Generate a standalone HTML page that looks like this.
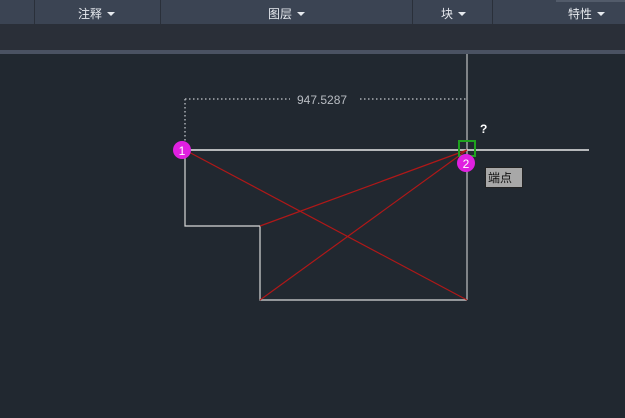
<!DOCTYPE html>
<html><head><meta charset="utf-8"><style>
html,body{margin:0;padding:0;width:625px;height:418px;overflow:hidden;background:#212830;font-family:"Liberation Sans","Noto Sans CJK SC",sans-serif}
.tb{position:absolute;left:0;top:0;width:625px;height:24px;background:#3b4453}
.sep{position:absolute;top:0;width:1px;height:24px;background:#2a303a}
.lbl{position:absolute;top:7px;font-size:12px;color:#e6e9ee;line-height:14px}
.tri{display:inline-block;width:0;height:0;border-left:4px solid transparent;border-right:4px solid transparent;border-top:4px solid #e6e9ee;margin-left:5px;vertical-align:2px}
</style></head><body>
<div class="tb">
<div class="sep" style="left:34px"></div>
<div class="sep" style="left:160px"></div>
<div class="sep" style="left:412px"></div>
<div class="sep" style="left:492px"></div>
<div class="lbl" style="left:78px">注释<span class="tri"></span></div>
<div class="lbl" style="left:268px">图层<span class="tri"></span></div>
<div class="lbl" style="left:441px">块<span class="tri"></span></div>
<div class="lbl" style="left:568px">特性<span class="tri"></span></div>
<div style="position:absolute;left:556px;top:0;width:69px;height:2px;background:#525b6a"></div>
</div>
<div style="position:absolute;left:0;top:24px;width:625px;height:26px;background:#2a2f38"></div>
<div style="position:absolute;left:0;top:50px;width:625px;height:4px;background:#4a5262"></div>
<svg width="625" height="418" style="position:absolute;left:0;top:0">
<line x1="467" y1="54" x2="467" y2="300" stroke="#e0e0e0" stroke-width="1"/>
<line x1="183" y1="150" x2="589" y2="150" stroke="#e8e8e8" stroke-width="1.5"/>
<polyline points="185,150 185,226 260,226 260,300 467,300" fill="none" stroke="#d8d8d8" stroke-width="1.2"/>
<g stroke="#b01818" stroke-width="1.2">
<line x1="185" y1="150" x2="467" y2="300"/>
<line x1="260" y1="300" x2="467" y2="150"/>
<line x1="260" y1="226" x2="467" y2="150"/>
</g>
<g stroke="#a9adb3" stroke-width="1.5" stroke-dasharray="1.5,2.5">
<line x1="185" y1="99" x2="290" y2="99"/>
<line x1="360" y1="99" x2="467" y2="99"/>
<line x1="185" y1="99" x2="185" y2="145"/>
</g>
<text x="297" y="104" font-size="12" fill="#b8bcc2" font-family="Liberation Sans,sans-serif">947.5287</text>
<rect x="459" y="141" width="16" height="15" fill="none" stroke="#1fa21f" stroke-width="2"/>
<circle cx="182" cy="150" r="9" fill="#e020e0"/>
<text x="182" y="155" font-size="12" fill="#fff" text-anchor="middle" font-family="Liberation Sans,sans-serif">1</text>
<circle cx="466" cy="163" r="9" fill="#e020e0"/>
<text x="466" y="168" font-size="12" fill="#fff" text-anchor="middle" font-family="Liberation Sans,sans-serif">2</text>
<text x="480" y="133" font-size="12" font-weight="bold" fill="#fff" font-family="Liberation Sans,sans-serif">?</text>
<rect x="485.5" y="167.5" width="37" height="20" fill="#a8a8a8" stroke="#222" stroke-width="1"/>
<text x="488" y="182" font-size="12" fill="#111" font-family="Liberation Sans,Noto Sans CJK SC,sans-serif">端点</text>
</svg>
</body></html>
